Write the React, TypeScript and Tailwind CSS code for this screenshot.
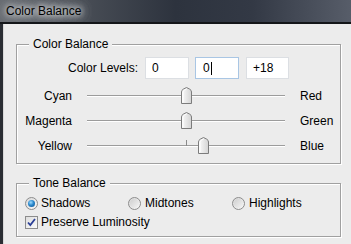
import React from "react";

const font = "font-['Liberation_Sans',Arial,sans-serif]";

function Thumb() {
  return (
    <svg width="11" height="17" viewBox="0 0 11 17">
      <defs>
        <linearGradient id="tg" x1="0" y1="0" x2="1" y2="0">
          <stop offset="0" stopColor="#fbfbfb" />
          <stop offset="1" stopColor="#d4d4d4" />
        </linearGradient>
      </defs>
      <path
        d="M0.5 16.5 L0.5 5 Q0.5 3.2 2.2 2.2 L5.5 0.5 L8.8 2.2 Q10.5 3.2 10.5 5 L10.5 16.5 Z"
        fill="url(#tg)"
        stroke="#7c7c7c"
        strokeWidth="1"
      />
      <path d="M2 15 L2 5.5 Q2 4 3.4 3.2 L5.5 2" fill="none" stroke="#ffffff" strokeWidth="1" />
    </svg>
  );
}

function SliderRow({ left, right, value }: { left: string; right: string; value: number }) {
  const pos = Math.round(99 + (value / 100) * 99 - 5.5);
  return (
    <div className="flex items-center h-[25px]">
      <div className="w-[55px] text-right">{left}</div>
      <div className="relative ml-[15px] w-[198px] h-[17px] flex items-center">
        <div className="w-full flex flex-col">
          <div className="h-[1px] bg-[#9c9c9c]" />
          <div className="h-[1px] bg-[#ffffff]" />
        </div>
        <div className="absolute left-[99px] top-[3px] w-[1px] h-[6px] bg-[#8a8a8a]" />
        <div className="absolute top-0" style={{ left: pos }}>
          <Thumb />
        </div>
      </div>
      <div className="ml-[15px]">{right}</div>
    </div>
  );
}

function Radio({ checked }: { checked?: boolean }) {
  return (
    <div className="w-[13px] h-[13px] rounded-full border border-[#8c8c8c] bg-[linear-gradient(135deg,#d8d8d8,#f8f8f8)] flex items-center justify-center shrink-0">
      {checked ? (
        <div className="w-[7px] h-[7px] rounded-full bg-[radial-gradient(circle_at_40%_35%,#9fdcff_0%,#2a88cc_45%,#0b4f8c_100%)]" />
      ) : (
        <div className="w-[9px] h-[9px] rounded-full bg-[linear-gradient(135deg,#cfcfcf,#f4f4f4)]" />
      )}
    </div>
  );
}

function Checkbox() {
  return (
    <div className="w-[13px] h-[13px] border border-[#8c8c8c] bg-[linear-gradient(135deg,#dedede,#fafafa)] flex items-center justify-center shrink-0">
      <svg width="11" height="11" viewBox="0 0 11 11">
        <path d="M2 5.5 L4.3 8 L9 2" fill="none" stroke="#2b3f96" strokeWidth="1.8" />
      </svg>
    </div>
  );
}

export default function App() {
  return (
    <div className={`w-[351px] h-[244px] bg-[#ececec] flex flex-col overflow-hidden text-[12px] leading-[14px] text-black ${font}`}>
      <div className="h-[22px] flex items-center pl-[6px] bg-[linear-gradient(to_right,#676b71_0%,#4a4f57_22%,#2d333e_50%,#333945_72%,#575d69_100%)]">
        <span className="[text-shadow:0_0_5px_#e4e6e8,0_0_9px_#d4d6d8,0_0_13px_#c4c6c8,0_0_13px_#c4c6c8]">
          Color Balance
        </span>
      </div>
      <div className="h-[2px] bg-[#141619]" />
      <div className="flex flex-1">
        <div className="w-[3px] bg-[#2a2d33]" />
        <div className="w-[1px] bg-[#d8d8d8]" />
        <div className="flex flex-col pl-[12px]">
          {/* Color Balance group */}
          <div className="mt-[20px] w-[325px] h-[120px] border border-[#a0a0a0] shadow-[1px_1px_0_#ffffff,inset_1px_1px_0_#ffffff] flex flex-col">
            <div className="-mt-[8px] h-[14px] flex">
              <span className="ml-[12px] px-[4px] bg-[#ececec]">Color Balance</span>
            </div>
            <div className="mt-[6px] flex items-center h-[22px]">
              <div className="w-[121px] text-right">Color Levels:</div>
              <div className="ml-[7px] w-[44px] h-[22px] bg-white border border-[#dcdfe3] flex items-center pl-[6px]">0</div>
              <div className="ml-[6px] w-[44px] h-[22px] bg-white border border-[#a9c6e4] flex items-center pl-[7px]">
                0<span className="inline-block w-[1px] h-[13px] bg-black ml-[1px]" />
              </div>
              <div className="ml-[7px] w-[43px] h-[22px] bg-white border border-[#dcdfe3] flex items-center pl-[6px]">+18</div>
            </div>
            <div className="mt-[4px] flex flex-col">
              <SliderRow left="Cyan" right="Red" value={0} />
              <SliderRow left="Magenta" right="Green" value={0} />
              <SliderRow left="Yellow" right="Blue" value={18} />
            </div>
          </div>
          {/* Tone Balance group */}
          <div className="mt-[19px] w-[325px] h-[54px] border border-[#a0a0a0] shadow-[1px_1px_0_#ffffff,inset_1px_1px_0_#ffffff] flex flex-col">
            <div className="-mt-[8px] h-[14px] flex">
              <span className="ml-[12px] px-[4px] bg-[#ececec]">Tone Balance</span>
            </div>
            <div className="mt-[5px] h-[16px] flex items-center pl-[8px]">
              <div className="w-[103px] flex items-center">
                <Radio checked />
                <span className="ml-[3px]">Shadows</span>
              </div>
              <div className="w-[104px] flex items-center">
                <Radio />
                <span className="ml-[4px]">Midtones</span>
              </div>
              <div className="flex items-center">
                <Radio />
                <span className="ml-[4px]">Highlights</span>
              </div>
            </div>
            <div className="mt-[3px] h-[16px] flex items-center pl-[8px]">
              <Checkbox />
              <span className="ml-[3px]">Preserve Luminosity</span>
            </div>
          </div>
        </div>
      </div>
    </div>
  );
}
